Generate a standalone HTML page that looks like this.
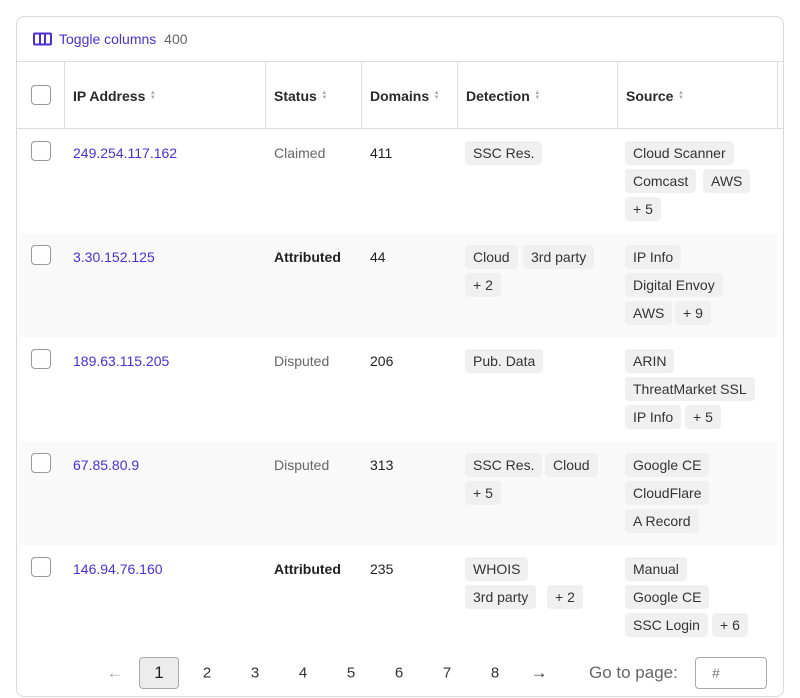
<!DOCTYPE html>
<html><head><meta charset="utf-8"><style>
*{box-sizing:border-box;margin:0;padding:0}
body{width:800px;height:698px;background:#fff;font-family:"Liberation Sans",sans-serif;font-size:14px;color:#222;position:relative;overflow:hidden}
.card{position:absolute;left:16px;top:16px;width:768px;height:681px;border:1px solid #d9d9d9;border-radius:8px}
.a{position:absolute;white-space:nowrap}
.cb{position:absolute;width:20px;height:20px;border:1px solid #999;border-radius:4px;background:#fff}
.hl{position:absolute;background:#dcdcdc}
.th{position:absolute;top:88px;font-weight:bold;font-size:14px;color:#2a2a2a}
.si{display:inline-block;margin-left:4px;font-size:6px;line-height:5px;color:#aaa;vertical-align:2px;width:7px;text-align:center}
.ip{color:#4b2fd6}
.tag{position:absolute;height:24px;line-height:24px;padding:0 8px;background:#f0f0f0;border-radius:4px;font-size:14px;color:#333;white-space:nowrap}
.stripe{position:absolute;left:19px;width:758px;height:104px;background:#f9f9f9}
.pg{position:absolute;top:673px;font-size:15px;color:#333;transform:translate(-50%,-50%)}
</style></head><body>
<div class="card"></div>
<svg class="a" style="left:33px;top:32px" width="19" height="14" viewBox="0 0 19 14"><rect x="1" y="1.5" width="17" height="11" rx="1" fill="none" stroke="#4b2fd6" stroke-width="2"/><line x1="7" y1="2" x2="7" y2="12" stroke="#4b2fd6" stroke-width="2"/><line x1="12" y1="2" x2="12" y2="12" stroke="#4b2fd6" stroke-width="2"/></svg>
<div class="a" style="left:59px;top:31px;color:#4b2fd6">Toggle columns <span style="color:#666;margin-left:4px">400</span></div>
<div class="hl" style="left:17px;top:61px;width:766px;height:1px"></div>
<div class="hl" style="left:17px;top:128px;width:766px;height:1px"></div>
<div class="hl" style="left:64px;top:62px;width:1px;height:66px"></div>
<div class="hl" style="left:265px;top:62px;width:1px;height:66px"></div>
<div class="hl" style="left:361px;top:62px;width:1px;height:66px"></div>
<div class="hl" style="left:457px;top:62px;width:1px;height:66px"></div>
<div class="hl" style="left:617px;top:62px;width:1px;height:66px"></div>
<div class="hl" style="left:777px;top:62px;width:1px;height:66px"></div>
<div class="cb" style="left:31px;top:85px"></div>
<div class="th" style="left:73px">IP Address<span class="si">▲<br>▼</span></div>
<div class="th" style="left:274px">Status<span class="si">▲<br>▼</span></div>
<div class="th" style="left:370px">Domains<span class="si">▲<br>▼</span></div>
<div class="th" style="left:466px">Detection<span class="si">▲<br>▼</span></div>
<div class="th" style="left:626px">Source<span class="si">▲<br>▼</span></div>

<div class="stripe" style="top:233px"></div>
<div class="stripe" style="top:441px"></div>

<div class="cb" style="left:31px;top:141px"></div>
<div class="a ip" style="left:73px;top:145px">249.254.117.162</div>
<div class="a" style="left:274px;top:145px;color:#666">Claimed</div>
<div class="a" style="left:370px;top:145px">411</div>
<div class="tag" style="left:465px;top:141px">SSC Res.</div>
<div class="tag" style="left:625px;top:141px">Cloud Scanner</div>
<div class="tag" style="left:625px;top:169px">Comcast</div>
<div class="tag" style="left:703px;top:169px">AWS</div>
<div class="tag" style="left:625px;top:197px">+ 5</div>

<div class="cb" style="left:31px;top:245px"></div>
<div class="a ip" style="left:73px;top:249px">3.30.152.125</div>
<div class="a" style="left:274px;top:249px;font-weight:bold">Attributed</div>
<div class="a" style="left:370px;top:249px">44</div>
<div class="tag" style="left:465px;top:245px">Cloud</div>
<div class="tag" style="left:523px;top:245px">3rd party</div>
<div class="tag" style="left:465px;top:273px">+ 2</div>
<div class="tag" style="left:625px;top:245px">IP Info</div>
<div class="tag" style="left:625px;top:273px">Digital Envoy</div>
<div class="tag" style="left:625px;top:301px">AWS</div>
<div class="tag" style="left:675px;top:301px">+ 9</div>

<div class="cb" style="left:31px;top:349px"></div>
<div class="a ip" style="left:73px;top:353px">189.63.115.205</div>
<div class="a" style="left:274px;top:353px;color:#666">Disputed</div>
<div class="a" style="left:370px;top:353px">206</div>
<div class="tag" style="left:465px;top:349px">Pub. Data</div>
<div class="tag" style="left:625px;top:349px">ARIN</div>
<div class="tag" style="left:625px;top:377px">ThreatMarket SSL</div>
<div class="tag" style="left:625px;top:405px">IP Info</div>
<div class="tag" style="left:685px;top:405px">+ 5</div>

<div class="cb" style="left:31px;top:453px"></div>
<div class="a ip" style="left:73px;top:457px">67.85.80.9</div>
<div class="a" style="left:274px;top:457px;color:#666">Disputed</div>
<div class="a" style="left:370px;top:457px">313</div>
<div class="tag" style="left:465px;top:453px">SSC Res.</div>
<div class="tag" style="left:545px;top:453px">Cloud</div>
<div class="tag" style="left:465px;top:481px">+ 5</div>
<div class="tag" style="left:625px;top:453px">Google CE</div>
<div class="tag" style="left:625px;top:481px">CloudFlare</div>
<div class="tag" style="left:625px;top:509px">A Record</div>

<div class="cb" style="left:31px;top:557px"></div>
<div class="a ip" style="left:73px;top:561px">146.94.76.160</div>
<div class="a" style="left:274px;top:561px;font-weight:bold">Attributed</div>
<div class="a" style="left:370px;top:561px">235</div>
<div class="tag" style="left:465px;top:557px">WHOIS</div>
<div class="tag" style="left:465px;top:585px">3rd party</div>
<div class="tag" style="left:547px;top:585px">+ 2</div>
<div class="tag" style="left:625px;top:557px">Manual</div>
<div class="tag" style="left:625px;top:585px">Google CE</div>
<div class="tag" style="left:625px;top:613px">SSC Login</div>
<div class="tag" style="left:712px;top:613px">+ 6</div>

<div class="pg" style="left:115px;color:#aaa;font-size:17px">←</div>
<div class="a" style="left:139px;top:657px;width:40px;height:32px;border:1px solid #aaa;border-radius:4px;background:#ececec;text-align:center;line-height:30px;font-size:17px">1</div>
<div class="pg" style="left:207px">2</div>
<div class="pg" style="left:255px">3</div>
<div class="pg" style="left:303px">4</div>
<div class="pg" style="left:351px">5</div>
<div class="pg" style="left:399px">6</div>
<div class="pg" style="left:447px">7</div>
<div class="pg" style="left:495px">8</div>
<div class="pg" style="left:539px;font-size:17px">→</div>
<div class="a" style="left:589px;top:663px;font-size:17px;color:#666">Go to page:</div>
<div class="a" style="left:695px;top:657px;width:72px;height:32px;border:1px solid #aaa;border-radius:4px;padding-left:16px;line-height:30px;color:#777">#</div>
</body></html>
